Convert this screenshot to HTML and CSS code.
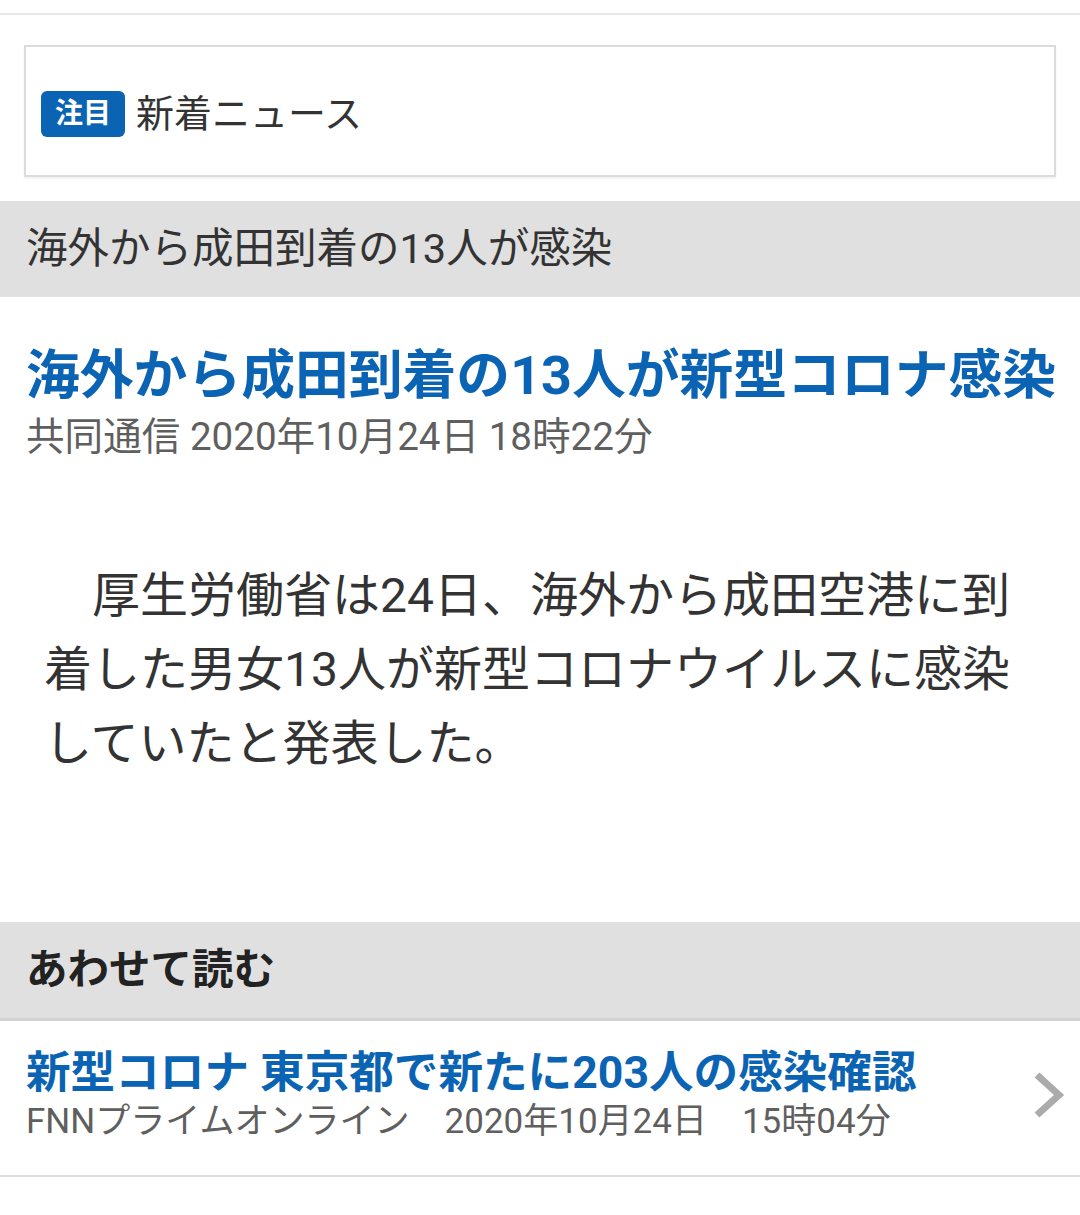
FILE: index.html
```html
<!DOCTYPE html>
<html lang="ja">
<head>
  <meta charset="UTF-8" />
  <meta name="viewport" content="width=device-width, initial-scale=1.0" />
  <title>海外から成田到着の13人が新型コロナ感染</title>
  <link rel="stylesheet" href="styles.css">
</head>
<body>
  <div class="topline"></div>

  <div class="notice">
    <span class="badge">注目</span>
    <span class="notice-text">新着ニュース</span>
  </div>

  <h2 class="section-head">海外から成田到着の13人が感染</h2>

  <article class="article">
    <h1 class="article-title">海外から成田到着の13人が新型コロナ感染</h1>
    <div class="article-meta">共同通信 2020年10月24日 18時22分</div>
    <p class="article-body">　厚生労働省は24日、海外から成田空港に到着した男女13人が新型コロナウイルスに感染していたと発表した。</p>
  </article>

  <h2 class="section-head related-head">あわせて読む</h2>

  <a class="related-item" href="#">
    <div class="related-text">
      <div class="related-title">新型コロナ 東京都で新たに203人の感染確認</div>
      <div class="related-meta">FNNプライムオンライン　2020年10月24日　15時04分</div>
    </div>
    <svg class="chevron" width="36" height="52" viewBox="0 0 36 52">
      <polyline points="7,6 29,26 7,46" fill="none" stroke="#ababab" stroke-width="7" />
    </svg>
  </a>
</body>
</html>
```

FILE: styles.css
```css
/* --- base ----------------------------------------------------------- */
* {
  margin: 0;
  padding: 0;
  box-sizing: border-box;
}

:root {
  --blue: #0b64b3;
  --text: #333;
  --sub: #5f5f5f;
  --band: #e0e0e0;
  --line: #dcdcdc;
}

body {
  font-family: Roboto, "Noto Sans CJK JP", sans-serif;
  background: #fff;
  color: var(--text);
}

.topline {
  height: 2px;
  margin-top: 13px;
  background: #e6e6e6;
}

/* --- notice box ----------------------------------------------------- */
.notice {
  display: flex;
  align-items: center;
  height: 132px;
  margin: 30px 24px 0;
  padding: 6px 15px 0;
  border: 2px solid var(--line);
  box-shadow: 0 2px 2px rgba(0, 0, 0, 0.05);
}

.badge {
  display: inline-block;
  height: 46px;
  padding: 0 14px;
  border-radius: 6px;
  background: var(--blue);
  color: #fff;
  font-size: 28px;
  font-weight: 700;
  line-height: 46px;
}

.notice-text {
  margin: 0 0 8px 11px;
  font-size: 38px;
  color: var(--text);
}

/* --- grey section bands --------------------------------------------- */
.section-head {
  margin-top: 24px;
  height: 96px;
  padding-left: 26px;
  background: var(--band);
  font-size: 41.5px;
  font-weight: 400;
  line-height: 96px;
  color: var(--text);
}

/* --- article -------------------------------------------------------- */
.article {
  padding: 48px 20px 0 26px;
}

.article-title {
  font-size: 53.8px;
  font-weight: 700;
  line-height: 62px;
  color: var(--blue);
}

.article-meta {
  font-size: 38.6px;
  line-height: 60px;
  color: var(--sub);
}

.article-body {
  margin-top: 92px;
  padding: 0 42px 0 18px;
  font-size: 48px;
  line-height: 74px;
  color: var(--text);
}

/* --- related -------------------------------------------------------- */
.related-head {
  margin-top: 141px;
  border-bottom: 3px solid #d2d2d2;
  height: 99px;
  font-weight: 700;
  color: #222;
}

.related-item {
  display: flex;
  align-items: center;
  justify-content: space-between;
  padding: 25px 14px 31px 26px;
  border-bottom: 2px solid var(--line);
  text-decoration: none;
}

.related-title {
  font-size: 44.6px;
  font-weight: 700;
  line-height: 54px;
  color: var(--blue);
}

.related-meta {
  font-size: 35px;
  line-height: 44px;
  color: var(--sub);
}

.chevron {
  flex-shrink: 0;
}
```
